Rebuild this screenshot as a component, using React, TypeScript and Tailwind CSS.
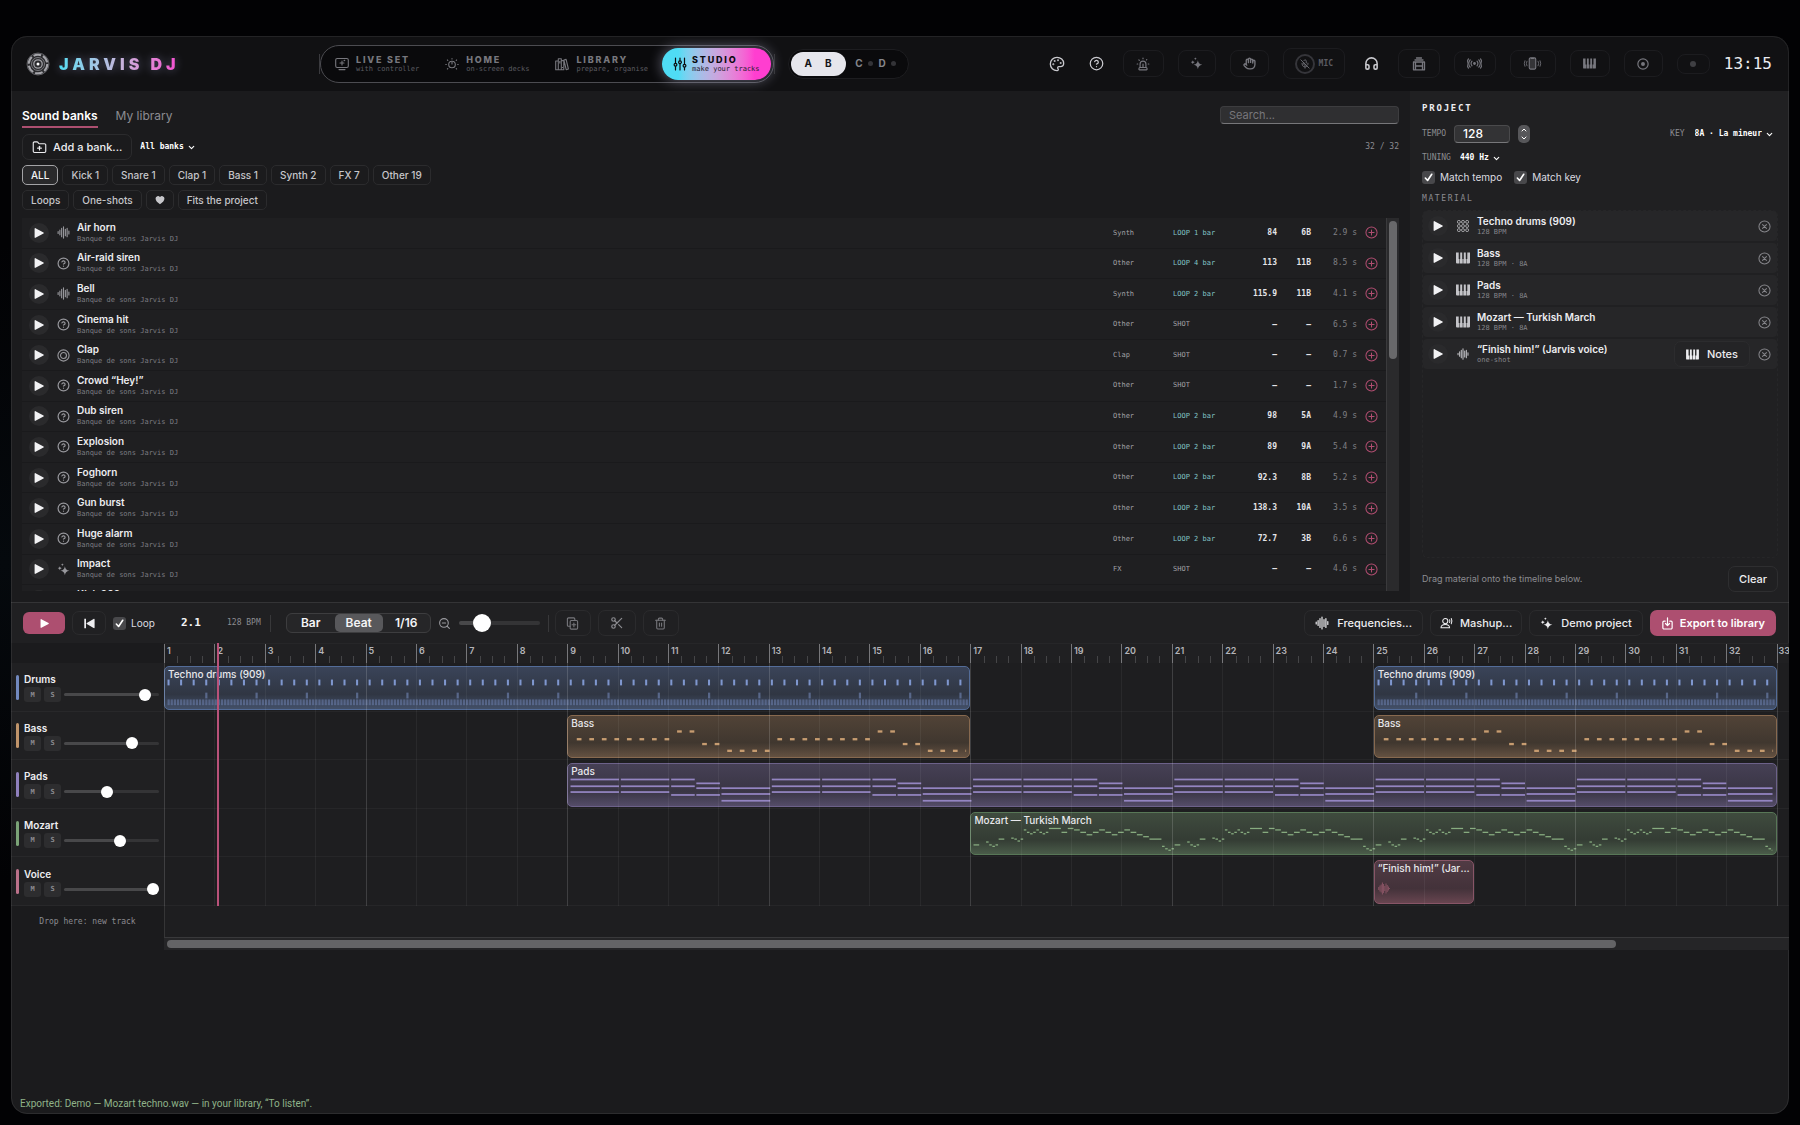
import type { ReactNode } from 'react'
import {
  ChevronDown,
  ChevronUp,
  CircleHelp,
  FolderPlus,
  Hand,
  Headphones,
  MicOff,
  Palette,
  Scissors,
  Siren,
  Trash2,
  ZoomOut,
} from 'lucide-react'

const MONO = "font-['DejaVu_Sans_Mono','Liberation_Mono',monospace]"

// Bars that fit in the visible part of the timeline.
const VISIBLE_BARS = 32.24
const pct = (bars: number) => `${(bars / VISIBLE_BARS) * 100}%`

type IconProps = { className?: string }

function PlayIcon({ className }: IconProps) {
  return (
    <svg className={className} viewBox="0 0 10 10" fill="currentColor" aria-hidden="true">
      <path d="M.6.7c0-.5.5-.8.9-.5l8 4.3c.4.2.4.8 0 1l-8 4.300c-.4.3-.9 0-.9-.5z" />
    </svg>
  )
}

function WaveIcon({ className }: IconProps) {
  return (
    <svg
      className={className}
      viewBox="0 0 14 14"
      fill="none"
      stroke="currentColor"
      strokeWidth="1.2"
      strokeLinecap="round"
      aria-hidden="true"
    >
      <path d="M1.200 6v2M3.100 4.500v5M5 2.500v9M7 1v12M9 3.500v7M10.900 2.500v9M12.800 5.500v3" />
    </svg>
  )
}

function HelpIcon({ className }: IconProps) {
  return <CircleHelp className={className} strokeWidth={2.2} aria-hidden="true" />
}

function TargetIcon({ className }: IconProps) {
  return (
    <svg className={className} viewBox="0 0 14 14" fill="none" stroke="currentColor" strokeWidth="1.200" aria-hidden="true">
      <circle cx="7" cy="7" r="6" />
      <circle cx="7" cy="7" r="3.200" />
    </svg>
  )
}

function SparkleIcon({ className }: IconProps) {
  return (
    <svg className={className} viewBox="0 0 14 14" fill="currentColor" aria-hidden="true">
      <path d="M8.500 3.500c.5 3 1.500 4.200 4.800 4.900-3.300.7-4.300 1.800-4.800 4.900-.5-3.100-1.500-4.200-4.800-4.900 3.300-.7 4.300-1.900 4.800-4.900z" />
      <path d="M3 3.600c.3 1.300.8 1.700 2.200 2-1.400.3-1.900.8-2.200 2.100-.3-1.300-.8-1.800-2.200-2.100 1.400-.3 1.900-.7 2.200-2zM5.800.4c.2.900.5 1.200 1.500 1.400-1 .2-1.300.5-1.500 1.400-.2-.9-.5-1.200-1.500-1.400 1-.2 1.300-.5 1.500-1.400z" />
    </svg>
  )
}

function PianoIcon({ className }: IconProps) {
  return (
    <svg className={className} viewBox="0 0 14 12" fill="currentColor" fillRule="evenodd" aria-hidden="true">
      <path d="M0 .5h14v10a1 1 0 0 1-1 1H1a1 1 0 0 1-1-1zM2.700.5v6.500h.5v4.500h.5V7h.5V.5zM6.200.5v6.500h.5v4.500h.6V7h.5V.5zM9.800.5v6.500h.5v4.500h.5V7h.5V.5z" />
    </svg>
  )
}

function GridIcon({ className }: IconProps) {
  return (
    <svg className={className} viewBox="0 0 14 14" fill="none" stroke="currentColor" strokeWidth="1" aria-hidden="true">
      {[2.2, 7, 11.8].map((y) =>
        [2.2, 7, 11.8].map((x) => <rect key={`${x}-${y}`} x={x - 1.6} y={y - 1.6} width="3.2" height="3.2" rx="1.2" />),
      )}
    </svg>
  )
}

function PlusIcon({ className }: IconProps) {
  return (
    <svg className={className} viewBox="0 0 14 14" fill="none" stroke="currentColor" strokeWidth="1.100" strokeLinecap="round" aria-hidden="true">
      <circle cx="7" cy="7" r="6" />
      <path d="M7 4.200v5.600M4.200 7h5.600" />
    </svg>
  )
}

function CrossIcon({ className }: IconProps) {
  return (
    <svg className={className} viewBox="0 0 14 14" fill="none" stroke="currentColor" strokeWidth="1.100" strokeLinecap="round" aria-hidden="true">
      <circle cx="7" cy="7" r="6" />
      <path d="M4.900 4.900l4.200 4.200M9.100 4.900L4.900 9.100" />
    </svg>
  )
}

function ScreenIcon({ className }: IconProps) {
  return (
    <svg className={className} viewBox="0 0 14 14" fill="none" stroke="currentColor" strokeWidth="1.100" strokeLinecap="round" aria-hidden="true">
      <rect x="0.700" y="1.500" width="12.600" height="9" rx="1.500" />
      <path d="M4 12.600h6M7 4v4M5 6h4M9 3.800l.8-.5" />
    </svg>
  )
}

function DialIcon({ className }: IconProps) {
  return (
    <svg className={className} viewBox="0 0 14 14" fill="none" stroke="currentColor" strokeWidth="1.100" strokeLinecap="round" aria-hidden="true">
      <circle cx="7" cy="7.500" r="3.300" />
      <path d="M7 5v2M7 1.500v.5M2.400 3l.4.4M11.600 3l-.4.4M.8 7.500h.5M12.700 7.500h.5M2.400 12l.4-.4M11.600 12l-.4-.4" />
    </svg>
  )
}

function BooksIcon({ className }: IconProps) {
  return (
    <svg className={className} viewBox="0 0 14 14" fill="none" stroke="currentColor" strokeWidth="1.100" strokeLinejoin="round" aria-hidden="true">
      <path d="M.7 4h2.600v8.800H.7zM3.300 1.800h3v11h-3zM6.300 3.600h2.500v9.200H6.300zM8.900 3l2.200-.6 2.300 9.600-2.200.7zM4.800 4v2.500M7.500 10v1" />
    </svg>
  )
}

function FadersIcon({ className }: IconProps) {
  return (
    <svg className={className} viewBox="0 0 14 14" fill="none" stroke="currentColor" strokeWidth="1.200" strokeLinecap="round" aria-hidden="true">
      <path d="M2.500 1v5M2.500 9.500V13M7 1v2.500M7 7v6M11.500 1v6M11.500 10.500V13" />
      <circle cx="2.500" cy="7.800" r="1.400" />
      <circle cx="7" cy="5.200" r="1.400" />
      <circle cx="11.500" cy="8.800" r="1.400" />
    </svg>
  )
}

function CabinetIcon({ className }: IconProps) {
  return (
    <svg className={className} viewBox="0 0 14 14" fill="none" stroke="currentColor" strokeWidth="1.300" strokeLinejoin="round" aria-hidden="true">
      <path d="M4.500 1h5M3 3h8" strokeLinecap="round" />
      <path d="M1.500 5h11v7.800h-11zM3.500 9h7M3.500 5v7.800M10.500 5v7.800" />
    </svg>
  )
}

function BroadcastIcon({ className }: IconProps) {
  return (
    <svg className={className} viewBox="0 0 16 14" fill="none" stroke="currentColor" strokeWidth="1.200" strokeLinecap="round" aria-hidden="true">
      <circle cx="8" cy="7" r="0.900" fill="currentColor" />
      <path d="M5.300 4.500a4 4 0 0 0 0 5M10.700 4.500a4 4 0 0 1 0 5M3.300 3a6.500 6.500 0 0 0 0 8M12.700 3a6.500 6.500 0 0 1 0 8M1.500 2a9 9 0 0 0 0 10M14.500 2a9 9 0 0 1 0 10" />
    </svg>
  )
}

function PhoneIcon({ className }: IconProps) {
  return (
    <svg className={className} viewBox="0 0 20 14" fill="none" stroke="currentColor" strokeWidth="1.200" strokeLinecap="round" aria-hidden="true">
      <rect x="6.500" y="1" width="7" height="12" rx="1.300" fill="currentColor" fillOpacity="0.350" />
      <path d="M9 1.500h2" />
      <path d="M4 4.500a5 5 0 0 0 0 5M16 4.500a5 5 0 0 1 0 5M1.800 4a7 7 0 0 0 0 6M18.200 4a7 7 0 0 1 0 6" strokeWidth="0.900" />
    </svg>
  )
}

function RecordIcon({ className }: IconProps) {
  return (
    <svg className={className} viewBox="0 0 14 14" fill="none" stroke="currentColor" strokeWidth="1.400" aria-hidden="true">
      <circle cx="7" cy="7" r="6" />
      <circle cx="7" cy="7" r="2.300" fill="currentColor" stroke="none" />
    </svg>
  )
}

function DuplicateIcon({ className }: IconProps) {
  return (
    <svg className={className} viewBox="0 0 14 14" fill="none" stroke="currentColor" strokeWidth="1.200" strokeLinecap="round" strokeLinejoin="round" aria-hidden="true">
      <path d="M9.500 3.500v-1.300a1.200 1.200 0 0 0-1.200-1.200H2.700a1.200 1.200 0 0 0-1.200 1.200v6.600a1.200 1.200 0 0 0 1.200 1.200h1.800" />
      <rect x="4.500" y="3.800" width="8" height="9.200" rx="1.200" />
      <path d="M8.500 6.400v4M6.500 8.400h4" />
    </svg>
  )
}

function SingerIcon({ className }: IconProps) {
  return (
    <svg className={className} viewBox="0 0 16 14" fill="none" stroke="currentColor" strokeWidth="1.200" strokeLinecap="round" aria-hidden="true">
      <circle cx="6" cy="4.800" r="3" />
      <path d="M1 12.600c0-2.600 2-3.900 5-3.900s5 1.300 5 3.900zM11 3.300a4 4 0 0 1 0 3.200M13 1.800a7 7 0 0 1 0 6" />
    </svg>
  )
}

function ExportIcon({ className }: IconProps) {
  return (
    <svg className={className} viewBox="0 0 14 14" fill="none" stroke="currentColor" strokeWidth="1.300" strokeLinecap="round" strokeLinejoin="round" aria-hidden="true">
      <path d="M4.500 4.500H3.200A1.200 1.200 0 0 0 2 5.700v6a1.200 1.200 0 0 0 1.200 1.200h7.600a1.200 1.200 0 0 0 1.200-1.200v-6a1.200 1.200 0 0 0-1.200-1.200H9.500M7 1v8M4.800 7L7 9.200 9.200 7" />
    </svg>
  )
}

function HeartIcon({ className }: IconProps) {
  return (
    <svg className={className} viewBox="0 0 14 14" fill="currentColor" aria-hidden="true">
      <path d="M7 13C3 10.300.8 7.800.8 5A3.300 3.300 0 0 1 7 3.200 3.300 3.300 0 0 1 13.200 5c0 2.800-2.200 5.300-6.200 8z" />
    </svg>
  )
}

function LogoMark() {
  return (
    <svg className="size-6" viewBox="0 0 24 24" fill="none" aria-hidden="true">
      <circle cx="12" cy="12" r="11" fill="#2b2b2e" stroke="#6d6d72" strokeWidth="0.800" />
      <circle cx="12" cy="12" r="9.300" stroke="#a5a5aa" strokeWidth="2" strokeDasharray="7.700 2.040" />
      <circle cx="12" cy="12" r="6.500" stroke="#8b8b90" strokeWidth="0.800" />
      <circle cx="12" cy="12" r="4.200" stroke="#a0a0a5" strokeWidth="1.300" />
      <circle cx="12" cy="12" r="1.500" fill="#fff" />
    </svg>
  )
}

const NAV = [
  { title: 'LIVE SET', sub: 'with controller', Icon: ScreenIcon },
  { title: 'HOME', sub: 'on-screen decks', Icon: DialIcon },
  { title: 'LIBRARY', sub: 'prepare, organise', Icon: BooksIcon },
  { title: 'STUDIO', sub: 'make your tracks', Icon: FadersIcon, active: true },
]

function HeaderButton({ label, className, children }: { label: string; className: string; children: ReactNode }) {
  return (
    <button
      type="button"
      aria-label={label}
      className={`flex shrink-0 items-center justify-center rounded-lg border border-[#1c1c1f] text-[#77777e] ${className}`}
    >
      {children}
    </button>
  )
}

function PlainButton({ label, children }: { label: string; children: ReactNode }) {
  return (
    <button type="button" aria-label={label} className="flex w-[25px] shrink-0 justify-center text-[#c9c9ce]">
      {children}
    </button>
  )
}

function Header() {
  return (
    <header className="flex h-[55px] items-center bg-[#111113] pr-[17px] pl-[15px]">
      <div className="flex w-[294px] shrink-0 items-center gap-[9px]">
        <LogoMark />
        <h1 className="bg-linear-to-r from-[#4fdcf2] via-[#c3b5dc] to-[#f545cf] bg-clip-text text-[16px] leading-5 font-black tracking-[4px] text-transparent drop-shadow-[0_0_5px_rgba(190,190,255,0.4)]">
          JARVIS DJ
        </h1>
      </div>

      <nav className="relative flex shrink-0 items-center gap-[2px] rounded-full border border-[#4c4c51] bg-[#0a0a0c] p-[2px] before:pointer-events-none before:absolute before:-inset-x-[2px] before:inset-y-2 before:border-x before:border-[#3a3a3e]">
        {NAV.map(({ title, sub, Icon, active }) => (
          <a
            key={title}
            href="#"
            className={
              active
                ? 'flex h-8 items-center gap-[5px] rounded-full bg-linear-to-r from-[#4fdcf5] from-15% via-[#c9a6de] to-[#ff3ed0] to-85% px-[11px] text-[#0b0b10] shadow-[0_0_14px_rgba(220,220,255,0.45)]'
                : 'flex h-8 items-center gap-[7px] px-3 text-[#77777d]'
            }
          >
            <Icon className="size-[14px]" />
            <span className="flex flex-col">
              <span className="text-[9px] leading-[11px] font-extrabold tracking-[0.2em]">{title}</span>
              <span className={`${MONO} text-[7px] leading-[9px] ${active ? 'text-[#26202e]' : 'text-[#5c5c62]'}`}>
                {sub}
              </span>
            </span>
          </a>
        ))}
      </nav>

      <div className="ml-[14px] flex shrink-0 items-center rounded-full border border-[#1d1d20] bg-[#0a0a0c] p-[2px] text-[10px] font-bold">
        <button type="button" className="flex h-6 w-[55px] items-center justify-center gap-[13px] rounded-full bg-[#e6e6ec] text-[#141416]">
          <span>A</span>
          <span>B</span>
        </button>
        <button type="button" className="flex h-6 w-[60px] items-center justify-center gap-[5px] text-[#85858b]">
          C<span className="size-[5px] rounded-full bg-[#333337]" />
          <span className="pl-[1px]">D</span>
          <span className="size-[5px] rounded-full bg-[#333337]" />
        </button>
      </div>

      <div className="ml-auto flex items-center gap-[14px]">
        <PlainButton label="Theme">
          <Palette className="size-4" strokeWidth={2} />
        </PlainButton>
        <PlainButton label="Help">
          <CircleHelp className="size-[15px]" strokeWidth={2} />
        </PlainButton>
        <HeaderButton label="Siren" className="h-[27px] w-[41px]">
          <Siren className="size-[14px]" />
        </HeaderButton>
        <HeaderButton label="Effects" className="h-[27px] w-[38px]">
          <SparkleIcon className="size-[13px]" />
        </HeaderButton>
        <HeaderButton label="Gestures" className="h-[27px] w-[39px]">
          <Hand className="size-[13px]" strokeWidth={2.5} />
        </HeaderButton>
        <HeaderButton label="Microphone" className="h-[31px] w-[62px] gap-1">
          <span className="flex size-5 items-center justify-center rounded-full border-2 border-[#35353a]">
            <MicOff className="size-[10px]" />
          </span>
          <span className={`${MONO} text-[8px] font-bold text-[#5c5c62]`}>MIC</span>
        </HeaderButton>
        <PlainButton label="Headphones">
          <Headphones className="size-[15px]" strokeWidth={2.5} />
        </PlainButton>
        <HeaderButton label="Crates" className="h-[29px] w-[42px]">
          <CabinetIcon className="size-[14px]" />
        </HeaderButton>
        <HeaderButton label="Broadcast" className="h-[25px] w-[42px]">
          <BroadcastIcon className="h-[13px] w-[15px]" />
        </HeaderButton>
        <HeaderButton label="Phone" className="h-[28px] w-[46px]">
          <PhoneIcon className="h-[13px] w-[19px]" />
        </HeaderButton>
        <HeaderButton label="Keyboard" className="h-[27px] w-[40px]">
          <PianoIcon className="h-[11px] w-[13px]" />
        </HeaderButton>
        <HeaderButton label="Record" className="h-[27px] w-[39px]">
          <RecordIcon className="size-[12px]" />
        </HeaderButton>
        <HeaderButton label="Status" className="h-5 w-[33px]">
          <span className="size-[6px] rounded-full bg-[#3f3f43]" />
        </HeaderButton>
        <time className={`${MONO} text-[16px] leading-5 text-[#ececf0]`}>13:15</time>
      </div>
    </header>
  )
}

function Dropdown({ label, value }: { label: string; value: string }) {
  return (
    <span className="flex items-center gap-[3px] text-white">
      <select aria-label={label} className={`${MONO} field-sizing-content appearance-none bg-transparent text-[8px] leading-4 font-bold`}>
        <option>{value}</option>
      </select>
      <ChevronDown className="pointer-events-none size-[9px]" strokeWidth={3} />
    </span>
  )
}

function Checkbox({ label, className = '' }: { label: string; className?: string }) {
  return (
    <label className={`flex items-center gap-[5px] text-[10px] leading-4 text-[#dcdce0] ${className}`}>
      <span className="grid place-items-center">
        <input type="checkbox" defaultChecked className="size-[13px] appearance-none rounded-[3px] bg-[#48484b] [grid-area:1/1]" />
        <svg className="pointer-events-none size-[9px] [grid-area:1/1]" viewBox="0 0 10 10" fill="none" stroke="#fff" strokeWidth="1.800" strokeLinecap="round" strokeLinejoin="round">
          <path d="M1.500 5.600L4 8.300 8.600 1.400" />
        </svg>
      </span>
      {label}
    </label>
  )
}

function PlayButton({ name }: { name: string }) {
  return (
    <button type="button" aria-label={`Play ${name}`} className="flex size-5 shrink-0 items-center justify-center rounded-full bg-[#2a2a2c] text-[#f2f2f4]">
      <PlayIcon className="size-[10px]" />
    </button>
  )
}

const SOUNDS = [
  { name: 'Air horn', Icon: WaveIcon, type: 'Synth', kind: 'LOOP 1 bar', bpm: '84', key: '6B', time: '2.9 s' },
  { name: 'Air-raid siren', Icon: HelpIcon, type: 'Other', kind: 'LOOP 4 bar', bpm: '113', key: '11B', time: '8.5 s' },
  { name: 'Bell', Icon: WaveIcon, type: 'Synth', kind: 'LOOP 2 bar', bpm: '115.9', key: '11B', time: '4.1 s' },
  { name: 'Cinema hit', Icon: HelpIcon, type: 'Other', kind: 'SHOT', bpm: '—', key: '—', time: '6.5 s' },
  { name: 'Clap', Icon: TargetIcon, type: 'Clap', kind: 'SHOT', bpm: '—', key: '—', time: '0.7 s' },
  { name: 'Crowd “Hey!”', Icon: HelpIcon, type: 'Other', kind: 'SHOT', bpm: '—', key: '—', time: '1.7 s' },
  { name: 'Dub siren', Icon: HelpIcon, type: 'Other', kind: 'LOOP 2 bar', bpm: '98', key: '5A', time: '4.9 s' },
  { name: 'Explosion', Icon: HelpIcon, type: 'Other', kind: 'LOOP 2 bar', bpm: '89', key: '9A', time: '5.4 s' },
  { name: 'Foghorn', Icon: HelpIcon, type: 'Other', kind: 'LOOP 2 bar', bpm: '92.3', key: '8B', time: '5.2 s' },
  { name: 'Gun burst', Icon: HelpIcon, type: 'Other', kind: 'LOOP 2 bar', bpm: '138.3', key: '10A', time: '3.5 s' },
  { name: 'Huge alarm', Icon: HelpIcon, type: 'Other', kind: 'LOOP 2 bar', bpm: '72.7', key: '3B', time: '6.6 s' },
  { name: 'Impact', Icon: SparkleIcon, type: 'FX', kind: 'SHOT', bpm: '—', key: '—', time: '4.6 s' },
  { name: 'Kick 909', Icon: TargetIcon, type: 'Kick', kind: 'SHOT', bpm: '—', key: '—', time: '0.5 s' },
]

function SoundTable() {
  return (
    <div className="flex h-[373px] overflow-hidden">
      <table aria-label="Sounds" className="h-[398px] flex-1 table-fixed border-collapse">
        <colgroup>
          <col />
          <col className="w-[60px]" />
          <col className="w-[64px]" />
          <col className="w-[40px]" />
          <col className="w-[34px]" />
          <col className="w-[46px]" />
          <col className="w-[29px]" />
        </colgroup>
        <tbody>
          {SOUNDS.map(({ name, Icon, type, kind, bpm, key, time }) => (
            <tr key={name} className="border-b border-[#1a1a1c] bg-[#1f1f21]">
              <td className="p-0">
                <div className="flex items-center pl-[7px]">
                  <PlayButton name={name} />
                  <Icon className="ml-2 size-[13px] text-[#98989d]" />
                  <div className="ml-[7px]">
                    <div className="text-[10px] leading-[13px] font-semibold text-[#ededf0]">{name}</div>
                    <div className={`${MONO} text-[7px] leading-[11px] text-[#7c7c81]`}>Banque de sons Jarvis DJ</div>
                  </div>
                </div>
              </td>
              <td className={`${MONO} p-0 text-[7px] text-[#a2a2a7]`}>{type}</td>
              <td className={`${MONO} p-0 text-[7px] ${kind === 'SHOT' ? 'text-[#a2a2a7]' : 'text-[#82c4c6]'}`}>{kind}</td>
              <td className={`${MONO} p-0 text-right text-[8px] font-bold text-[#e4e4e8]`}>{bpm}</td>
              <td className={`${MONO} p-0 text-right text-[8px] font-bold text-[#e4e4e8]`}>{key}</td>
              <td className={`${MONO} p-0 text-right text-[8px] text-[#7f7f84]`}>{time}</td>
              <td className="p-0">
                <button type="button" aria-label={`Add ${name}`} className="mx-auto block text-[#b04d70]">
                  <PlusIcon className="size-[13px]" />
                </button>
              </td>
            </tr>
          ))}
        </tbody>
      </table>
      <div className="w-[13px] shrink-0 border-l border-[#3a3a3c] bg-[#2a2a2c] px-[2px] py-[3px]">
        <div className="h-[138px] rounded-full bg-[#68686a]" />
      </div>
    </div>
  )
}

const CATEGORIES = ['ALL', 'Kick 1', 'Snare 1', 'Clap 1', 'Bass 1', 'Synth 2', 'FX 7', 'Other 19']

const chip = 'flex h-5 items-center rounded-[5px] border px-2 text-[10px] font-medium'

function SoundBanks() {
  return (
    <section className="min-w-0 flex-1 px-[11px] pt-[15px] pb-[11px]">
      <div className="flex items-start">
        <div role="tablist" className="flex gap-[18px] text-[12px] leading-5">
          <button role="tab" aria-selected="true" type="button" className="border-b-2 border-[#ad4f70] font-semibold text-white">
            Sound banks
          </button>
          <button role="tab" aria-selected="false" type="button" className="border-b-2 border-transparent text-[#8c8c91]">
            My library
          </button>
        </div>
        <input
          type="search"
          aria-label="Search sounds"
          placeholder="Search..."
          className="ml-auto h-[18px] w-[179px] rounded-[4px] border border-[#3d3d3f] border-b-[#77777a] bg-[#2f2f31] px-2 text-[11px] text-white placeholder:text-[#77777b]"
        />
      </div>

      <div className="mt-[6px] flex items-center">
        <button type="button" className="flex h-[26px] items-center gap-[6px] rounded-[7px] border border-[#2b2b2d] px-[9px] text-[11px] font-medium text-[#ededf0]">
          <FolderPlus className="size-[15px]" strokeWidth={1.8} />
          Add a bank...
        </button>
        <div className="ml-2">
          <Dropdown label="Bank" value="All banks" />
        </div>
        <span className={`${MONO} ml-auto text-[8px] text-[#8c8c91]`}>32 / 32</span>
      </div>

      <div className="mt-[5px] flex gap-1">
        {CATEGORIES.map((name) => (
          <button
            key={name}
            type="button"
            className={`${chip} ${name === 'ALL' ? 'border-[#a3a3a6] bg-[#29292b] text-[#f4f4f6]' : 'border-[#2b2b2d] text-[#c6c6ca]'}`}
          >
            {name}
          </button>
        ))}
      </div>
      <div className="mt-[5px] mb-2 flex gap-1 text-[#c6c6ca]">
        <button type="button" className={`${chip} border-[#2b2b2d]`}>Loops</button>
        <button type="button" className={`${chip} border-[#2b2b2d]`}>One-shots</button>
        <button type="button" aria-label="Favourites" className={`${chip} border-[#2b2b2d]`}>
          <HeartIcon className="size-[10px]" />
        </button>
        <button type="button" className={`${chip} border-[#2b2b2d]`}>Fits the project</button>
      </div>

      <SoundTable />
    </section>
  )
}

const MATERIAL = [
  { name: 'Techno drums (909)', sub: '128 BPM', Icon: GridIcon },
  { name: 'Bass', sub: '128 BPM · 8A', Icon: PianoIcon },
  { name: 'Pads', sub: '128 BPM · 8A', Icon: PianoIcon },
  { name: 'Mozart — Turkish March', sub: '128 BPM · 8A', Icon: PianoIcon },
  { name: '“Finish him!” (Jarvis voice)', sub: 'one-shot', Icon: WaveIcon, notes: true },
]

function Project() {
  return (
    <aside className="flex w-[379px] shrink-0 flex-col bg-[#202022] pt-[9px] pr-[11px] pb-[10px] pl-3">
      <h2 className={`${MONO} text-[9px] leading-4 font-bold tracking-[0.2em] text-[#ededf0]`}>PROJECT</h2>
      <div className="mt-[9px] flex items-center">
        <label htmlFor="tempo" className={`${MONO} w-8 text-[8px] text-[#8c8c91]`}>TEMPO</label>
        <input
          id="tempo"
          defaultValue="128"
          className="h-[18px] w-14 rounded-[4px] border border-[#4a4a4c] border-b-[#77777a] bg-[#333335] px-2 text-[12px] font-medium text-white"
        />
        <span className="ml-2 flex h-[18px] w-3 flex-col items-center justify-between rounded-[5px] bg-[#57575a] py-px text-white">
          <button type="button" aria-label="Raise tempo">
            <ChevronUp className="size-2" strokeWidth={3} />
          </button>
          <button type="button" aria-label="Lower tempo">
            <ChevronDown className="size-2" strokeWidth={3} />
          </button>
        </span>
        <span className={`${MONO} mr-[10px] ml-auto text-[8px] text-[#8c8c91]`}>KEY</span>
        <div className="mr-1">
          <Dropdown label="Key" value="8A · La mineur" />
        </div>
      </div>
      <div className="mt-[7px] flex items-center">
        <span className={`${MONO} mr-[9px] text-[8px] text-[#8c8c91]`}>TUNING</span>
        <Dropdown label="Tuning" value="440 Hz" />
      </div>
      <div className="mt-[3px] flex gap-3">
        <Checkbox label="Match tempo" />
        <Checkbox label="Match key" />
      </div>
      <h3 className={`${MONO} mt-[6px] text-[8px] leading-4 tracking-[0.2em] text-[#8c8c91]`}>MATERIAL</h3>
      <ul className="mt-[3px] flex flex-1 flex-col gap-[2px] rounded-[6px] border border-dashed border-[#262628]">
        {MATERIAL.map(({ name, sub, Icon, notes }) => (
          <li key={name} className="flex h-[30px] items-center rounded-[4px] bg-[#262628] pr-[6px] pl-[5px]">
            <PlayButton name={name} />
            <Icon className="ml-2 h-[12px] w-[14px] text-[#c4c4c8]" />
            <div className="ml-[7px]">
              <div className="text-[10px] leading-[12px] font-semibold text-[#ededf0]">{name}</div>
              <div className={`${MONO} text-[7px] leading-[11px] text-[#85858a]`}>{sub}</div>
            </div>
            <div className="ml-auto flex items-center gap-2">
              {notes && (
                <button type="button" className="flex h-[26px] items-center gap-2 rounded-[7px] border border-[#2c2c2e] bg-[#242426] px-[11px] text-[11px] font-medium text-[#ededf0]">
                  <PianoIcon className="h-[11px] w-[13px]" />
                  Notes
                </button>
              )}
              <button type="button" aria-label={`Remove ${name}`} className="text-[#85858a]">
                <CrossIcon className="size-[13px]" />
              </button>
            </div>
          </li>
        ))}
      </ul>
      <div className="mt-2 flex items-center justify-between">
        <p className="text-[9px] text-[#8c8c91]">Drag material onto the timeline below.</p>
        <button type="button" className="h-[26px] rounded-[7px] border border-[#2e2e30] px-[10px] text-[11px] font-medium text-[#ededf0]">
          Clear
        </button>
      </div>
    </aside>
  )
}

function Slider({ label, value, className }: { label: string; value: number; className: string }) {
  return (
    <input
      type="range"
      aria-label={label}
      defaultValue={value}
      style={{ backgroundImage: `linear-gradient(to right, #48484a ${value}%, #343436 ${value}%)` }}
      className={`appearance-none rounded-full [&::-webkit-slider-thumb]:appearance-none [&::-webkit-slider-thumb]:rounded-full [&::-webkit-slider-thumb]:bg-white ${className}`}
    />
  )
}

const outlined = 'flex h-[26px] items-center justify-center rounded-[7px] border border-[#2b2b2d] text-[11px] font-medium text-[#ededf0]'

function Toolbar() {
  return (
    <div className="flex h-10 items-center bg-[#202022] pr-[13px] pl-[12px]">
      <button type="button" aria-label="Play" className="flex h-[22px] w-[42px] items-center justify-center rounded-[6px] bg-[#ad4f70] text-white">
        <PlayIcon className="size-[9px]" />
      </button>
      <button type="button" aria-label="Back to start" className="ml-[7px] flex h-[24px] w-[34px] items-center justify-center rounded-[7px] border border-[#2b2b2d] text-[#ededf0]">
        <svg className="size-[11px]" viewBox="0 0 11 11" fill="currentColor" aria-hidden="true">
          <path d="M.3.800h1.700v9.400H.3zM10.600 1.500v8c0 .600-.5.800-1 .500L2.800 6c-.4-.3-.4-.7 0-1l6.800-4c.5-.3 1-.1 1 .500z" />
        </svg>
      </button>
      <Checkbox label="Loop" className="ml-[7px] w-10" />
      <span className={`${MONO} ml-[28px] w-5 text-[11px] font-bold text-[#f4f4f6]`}>2.1</span>
      <span className={`${MONO} ml-[26px] text-[8px] text-[#8c8c91]`}>128 BPM</span>
      <span className="ml-[9px] h-[17px] w-px bg-[#38383a]" />

      <div className="ml-[15px] flex h-[20px] items-stretch rounded-[6px] border border-[#3d3d3f] bg-[#262628] text-[12px] font-semibold text-[#f4f4f6]">
        <button type="button" className="w-[48px] leading-[18px]">Bar</button>
        <button type="button" className="w-[48px] rounded-[5px] bg-[#58585b] leading-[18px]">Beat</button>
        <button type="button" className="w-[47px] leading-[18px]">1/16</button>
      </div>
      <ZoomOut className="ml-[7px] size-[13px] text-[#9b9ba0]" strokeWidth={2} />
      <Slider label="Zoom" value={23} className="ml-2 h-1 w-[81px] [&::-webkit-slider-thumb]:size-[18px]" />
      <span className="ml-2 h-[17px] w-px bg-[#38383a]" />

      <div className="ml-[6px] flex gap-[7px]">
        <button type="button" aria-label="Duplicate" className={`${outlined} w-[36px]`}>
          <DuplicateIcon className="size-[13px] text-[#77777c]" />
        </button>
        <button type="button" aria-label="Split" className={`${outlined} w-[38px]`}>
          <Scissors className="size-[14px] text-[#8c8c91]" />
        </button>
        <button type="button" aria-label="Delete" className={`${outlined} w-[36px]`}>
          <Trash2 className="size-[13px] text-[#77777c]" />
        </button>
      </div>

      <div className="ml-auto flex gap-[7px]">
        <button type="button" className={`${outlined} gap-2 px-[10px]`}>
          <WaveIcon className="size-[14px]" />
          Frequencies...
        </button>
        <button type="button" className={`${outlined} gap-[6px] px-[9px]`}>
          <SingerIcon className="h-[12px] w-[14px]" />
          Mashup...
        </button>
        <button type="button" className={`${outlined} gap-2 px-[10px]`}>
          <SparkleIcon className="size-[13px]" />
          Demo project
        </button>
        <button type="button" className="flex h-[26px] items-center gap-[6px] rounded-[7px] bg-[#ad4f70] px-[11px] text-[11px] font-semibold text-white">
          <ExportIcon className="size-[13px]" />
          Export to library
        </button>
      </div>
    </div>
  )
}

// Notes are [start, length, y] with start and length in sixteenths.
type Note = [number, number, number]

function repeat(pattern: Note[], every: number, total: number): Note[] {
  const out: Note[] = []
  for (let at = 0; at < total; at += every) {
    for (const [start, length, y] of pattern) out.push([at + start, length, y])
  }
  return out
}

const BASS: Note[] = Array.from({ length: 16 }, (_, i) => [i * 4 + 2, 1.7, i < 8 ? 24 : i < 10 ? 16 : i < 12 ? 29 : 36])

const PADS: Note[] = [
  ...[0, 16].flatMap((x): Note[] => [[x, 15.6, 16], [x, 15.6, 23], [x, 15.6, 29]]),
  [32, 7.7, 16], [32, 7.7, 23], [32, 7.7, 32],
  [40, 7.7, 20], [40, 7.7, 25], [40, 7.7, 32],
  [48, 15.7, 25], [48, 15.7, 31], [48, 15.7, 38],
]

const MARCH: Note[] = [
  [0, 2, 33], [4, 1, 30], [5, 1, 33], [6, 1, 34.5], [7, 1, 33], [8, 2, 27], [12, 1, 26], [13, 1, 27], [14, 1, 29], [15, 1, 27],
  [16, 1, 17.5], [17, 1, 20], [18, 1, 21.5], [19, 1, 20], [20, 1, 17.5], [21, 1, 20], [22, 1, 21.5], [23, 1, 20],
  [24, 4, 16], [28, 2, 20], [30, 2, 16], [32, 2, 17.5], [34, 2, 20], [36, 2, 22.5], [38, 2, 20], [40, 2, 17.5],
  [42, 2, 20], [44, 2, 22.5], [46, 2, 20], [48, 2, 17.5], [50, 2, 20], [52, 2, 22.5], [54, 2, 24.5], [56, 4, 27],
  [60, 1, 34.5], [61, 1, 37], [62, 1, 38.5], [63, 1, 37],
]

function Notes({ notes, height, sixteenths, color }: { notes: Note[]; height: number; sixteenths: number; color: string }) {
  return (
    <svg className="absolute inset-0 size-full" viewBox={`-0.8 0 ${sixteenths} 43`} preserveAspectRatio="none" fill={color} aria-hidden="true">
      {notes.map(([x, length, y], i) => (
        <rect key={i} x={x} y={y - height / 2} width={Math.max(0, Math.min(length - 0.2, sixteenths - 1.8 - x))} height={height} />
      ))}
    </svg>
  )
}

function DrumHits({ sixteenths }: { sixteenths: number }) {
  const hits = Array.from({ length: sixteenths - 1 }, (_, i) => i)
  return (
    <svg className="absolute inset-0 size-full" viewBox={`-0.8 0 ${sixteenths} 43`} preserveAspectRatio="none" fill="#7f97cf" aria-hidden="true">
      {hits.map((i) => (
        <g key={i}>
          {i % 4 === 0 && <rect x={i} y="13" width="0.650" height="6" />}
          {i % 16 === 12 && <rect x={i} y="26.500" width="0.700" height="6" opacity="0.500" />}
          <rect x={i} y="33.500" width="0.700" height="6" opacity="0.400" />
        </g>
      ))}
    </svg>
  )
}

type Clip = { name: string; start: number; bars: number; art: ReactNode }
type Track = { name: string; volume: number; bar: string; clip: string; clips: Clip[] }

const bassNotes = (bars: number) => (
  <Notes notes={repeat(BASS, 64, bars * 16)} height={2.4} sixteenths={bars * 16} color="#c79c70" />
)

const TRACKS: Track[] = [
  {
    name: 'Drums',
    volume: 90,
    bar: 'bg-[#7289bf]',
    clip: 'border-[#536c98] from-[#3a4459] via-[#303643] via-65% to-[#435069]',
    clips: [
      { name: 'Techno drums (909)', start: 0, bars: 16, art: <DrumHits sixteenths={256} /> },
      { name: 'Techno drums (909)', start: 24, bars: 8, art: <DrumHits sixteenths={128} /> },
    ],
  },
  {
    name: 'Bass',
    volume: 75,
    bar: 'bg-[#c0946a]',
    clip: 'border-[#87694f] from-[#514337] via-[#40372f] via-65% to-[#645141]',
    clips: [
      { name: 'Bass', start: 8, bars: 8, art: bassNotes(8) },
      { name: 'Bass', start: 24, bars: 8, art: bassNotes(8) },
    ],
  },
  {
    name: 'Pads',
    volume: 45,
    bar: 'bg-[#8f80bd]',
    clip: 'border-[#6c6189] from-[#464055] via-[#393544] via-65% to-[#544c68]',
    clips: [
      { name: 'Pads', start: 8, bars: 24, art: <Notes notes={repeat(PADS, 64, 384)} height={1.8} sixteenths={384} color="#9485c2" /> },
    ],
  },
  {
    name: 'Mozart',
    volume: 60,
    bar: 'bg-[#7ba377]',
    clip: 'border-[#587757] from-[#3f4b3e] via-[#343c34] via-65% to-[#4a5c49]',
    clips: [
      { name: 'Mozart — Turkish March', start: 16, bars: 16, art: <Notes notes={repeat(MARCH, 64, 256)} height={1.3} sixteenths={256} color="#88ad80" /> },
    ],
  },
  {
    name: 'Voice',
    volume: 100,
    bar: 'bg-[#bb718a]',
    clip: 'border-[#885567] from-[#513b44] via-[#43323a] via-65% to-[#684550]',
    clips: [
      {
        name: '“Finish him!” (Jarvis voice)',
        start: 24,
        bars: 2,
        art: (
          <svg className="absolute top-[21px] left-[3px] h-[13px] w-[12px]" viewBox="0 0 12 13" fill="none" stroke="#8a5465" strokeWidth="1" aria-hidden="true">
            <path d="M.8 5v3M2 3.500v6M3.200 2.500v8M4.400 .5v12M5.600 2v9M6.800 4v5M8 1.500v10M9.200 3v7M10.400 4.500v4M11.400 6v1" />
          </svg>
        ),
      },
    ],
  },
]

const BARS = Array.from({ length: 32 }, (_, i) => i)

function Ruler() {
  return (
    <div className="flex h-5 border-t border-[#262628] bg-[#202022] text-[9px] leading-[13px] font-semibold text-[#b4b4b8]">
      {BARS.map((bar) => (
        <div key={bar} className="relative grid shrink-0 grid-cols-4 items-end border-l border-[#77777a]" style={{ width: pct(1) }}>
          <span className="absolute top-0 left-[2px]">{bar + 1}</span>
          <i />
          <i className="h-[7px] border-l border-[#454547]" />
          <i className="h-[7px] border-l border-[#454547]" />
          <i className="h-[7px] border-l border-[#454547]" />
        </div>
      ))}
      <div className="flex-1 border-l border-[#77777a] pl-px">33</div>
    </div>
  )
}

function Timeline() {
  return (
    <div className="flex">
      <div className="w-[153px] shrink-0">
        <div className="h-5 bg-[#1b1b1d]" />
        <div className="grid h-[243px] grid-rows-5 bg-[#202022]">
          {TRACKS.map(({ name, volume, bar }) => (
            <div key={name} className="flex items-center border-b border-[#28282a] pt-px pr-[5px] pl-[5px]">
              <span className={`h-[25px] w-[3px] rounded-full ${bar}`} />
              <div className="ml-[5px] flex-1">
                <div className="text-[10px] leading-[14px] font-semibold text-[#ededf0]">{name}</div>
                <div className="mt-px flex items-center gap-[3px]">
                  <button type="button" aria-label={`Mute ${name}`} className={`${MONO} h-[15px] w-[17px] rounded-[3px] bg-[#2d2d2f] text-[7px] font-bold text-[#8c8c91]`}>
                    M
                  </button>
                  <button type="button" aria-label={`Solo ${name}`} className={`${MONO} h-[15px] w-[17px] rounded-[3px] bg-[#2d2d2f] text-[7px] font-bold text-[#8c8c91]`}>
                    S
                  </button>
                  <Slider label={`${name} volume`} value={volume} className="h-[3px] w-0 flex-1 [&::-webkit-slider-thumb]:size-[12px]" />
                </div>
              </div>
            </div>
          ))}
        </div>
        <p className={`${MONO} h-[31px] text-center text-[8px] leading-[31px] text-[#8c8c91]`}>Drop here: new track</p>
      </div>

      <div className="relative min-w-0 flex-1 overflow-hidden bg-[#1e1e20]">
        <Ruler />
        <div className="relative grid h-[243px] grid-rows-5">
          {TRACKS.map(({ name, clip, clips }) => (
            <div key={name} className="relative border-b border-[#262628]">
              {clips.map(({ name: title, start, bars, art }) => (
                <div
                  key={start}
                  className={`absolute top-[3px] bottom-px overflow-hidden rounded-[5px] border bg-linear-to-b px-[3px] ${clip}`}
                  style={{ left: pct(start), width: pct(bars) }}
                >
                  {art}
                  <div className="relative truncate text-[10px] leading-[14px] font-medium text-[#e8e8ec]">{title}</div>
                </div>
              ))}
            </div>
          ))}
          <div className="pointer-events-none absolute inset-0 flex">
            {BARS.map((bar) => (
              <i key={bar} className={`shrink-0 border-l ${bar % 4 === 0 ? 'border-white/15' : 'border-white/5'}`} style={{ width: pct(1) }} />
            ))}
            <i className="border-l border-white/15" />
          </div>
        </div>
        <div className="absolute top-0 h-[263px] w-[2px] bg-[#b9527a]" style={{ left: pct(1.05) }} />
        <div className="h-[31px] border-l border-white/10" />
        <div className="h-[13px] border-t border-[#39393b] bg-[#252527] px-[3px] pt-[2px]">
          <div className="h-2 w-[89.5%] rounded-full bg-[#646466]" />
        </div>
      </div>
    </div>
  )
}

export default function App() {
  return (
    <div className="flex min-h-screen flex-col bg-[#020204] bg-[radial-gradient(ellipse_at_0%_50%,#05090d,#020204_40%)] px-[11px] pt-9 pb-[11px] font-['Inter','Liberation_Sans',sans-serif]">
      <div className="flex flex-1 flex-col overflow-hidden rounded-2xl bg-[#1b1b1d] outline -outline-offset-1 outline-white/8">
        <Header />
        <main className="flex flex-1 flex-col">
          <div className="flex border-b border-[#343436]">
            <SoundBanks />
            <Project />
          </div>
          <Toolbar />
          <Timeline />
          <p role="status" className="mt-auto px-[9px] pb-[3px] font-['Roboto','Inter',sans-serif] text-[10px] leading-[14px] text-[#8fb389]">
            Exported: Demo — Mozart techno.wav — in your library, “To listen”.
          </p>
        </main>
      </div>
    </div>
  )
}
